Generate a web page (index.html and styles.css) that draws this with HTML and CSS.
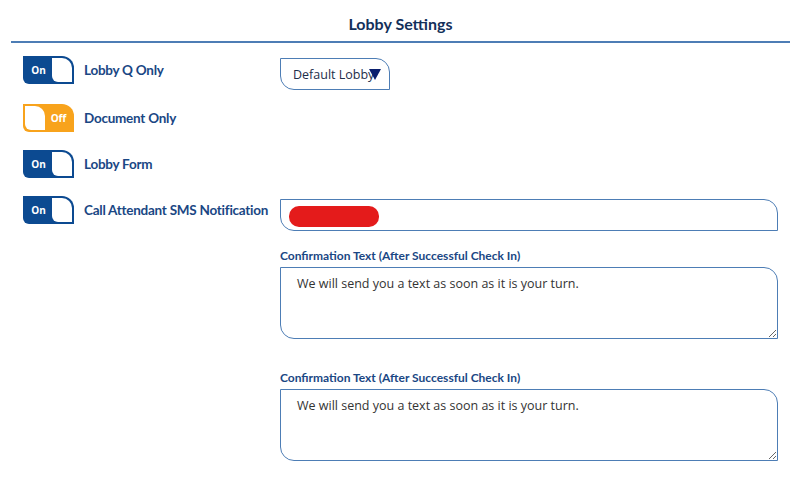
FILE: index.html
```html
<!DOCTYPE html>
<html lang="en">

<head>
    <meta charset="UTF-8">
    <meta name="viewport" content="width=device-width, initial-scale=1.0">
    <title>Lobby Settings</title>
    <link rel="stylesheet" href="styles.css">
</head>

<body>
    <div class="page">
        <h1 class="title">Lobby Settings</h1>

        <div class="settings">
            <div class="setting first">
                <span class="toggle on"><span class="toggle-text">On</span><span class="knob"></span></span>
                <span class="setting-label">Lobby Q Only</span>
            </div>
            <div class="field-col">
                <div class="select">Default Lobby<span class="caret"></span></div>
            </div>

            <div class="setting">
                <span class="toggle off"><span class="knob"></span><span class="toggle-text">Off</span></span>
                <span class="setting-label">Document Only</span>
            </div>
            <div></div>

            <div class="setting">
                <span class="toggle on"><span class="toggle-text">On</span><span class="knob"></span></span>
                <span class="setting-label">Lobby Form</span>
            </div>
            <div></div>

            <div class="setting">
                <span class="toggle on"><span class="toggle-text">On</span><span class="knob"></span></span>
                <span class="setting-label">Call Attendant SMS Notification</span>
            </div>
            <div class="field-col sms">
                <div class="text-input"><span class="redacted"></span></div>

                <label class="field-label">Confirmation Text (After Successful Check In)</label>
                <textarea class="text-area">We will send you a text as soon as it is your turn.</textarea>

                <label class="field-label second">Confirmation Text (After Successful Check In)</label>
                <textarea class="text-area">We will send you a text as soon as it is your turn.</textarea>
            </div>
        </div>
    </div>
</body>

</html>
```

FILE: styles.css
```css
:root {
    --navy: #0c4a91;
    --label: #1a4784;
    --line: #4d7db5;
    --orange: #f8a31c;
}

body {
    margin: 0;
    background: #ffffff;
    font-family: "Open Sans", "Noto Sans", sans-serif;
}

.page {
    padding: 0 11px;
}

.title {
    margin: 0;
    height: 41px;
    line-height: 47px;
    text-align: center;
    font-family: "Lato", sans-serif;
    font-size: 16px;
    font-weight: 700;
    color: #13305a;
    border-bottom: 2px solid var(--line);
}

.settings {
    display: grid;
    grid-template-columns: 269px 498px;
    align-items: start;
    padding-top: 13px;
}

.setting {
    display: flex;
    align-items: flex-start;
    gap: 10px;
    padding-left: 12px;
    height: 46px;
}

.setting.first {
    height: 48px;
}

.toggle {
    display: flex;
    align-items: stretch;
    width: 51px;
    height: 28px;
    box-sizing: border-box;
    padding: 2px;
    border-radius: 0 12px 0 6px;
    flex-shrink: 0;
}

.toggle.on {
    background: var(--navy);
}

.toggle.off {
    background: var(--orange);
}

.toggle-text {
    flex: 1;
    display: flex;
    align-items: center;
    justify-content: center;
    color: #ffffff;
    font-size: 10px;
    font-weight: 700;
}

.knob {
    width: 20px;
    background: #ffffff;
    border-radius: 0 10px 0 6px;
}

.setting-label {
    font-family: "Lato", sans-serif;
    font-size: 13.5px;
    letter-spacing: -0.25px;
    font-weight: 700;
    color: var(--label);
    line-height: 28px;
    white-space: nowrap;
}

.field-col {
    display: flex;
    flex-direction: column;
    padding-top: 2px;
}

.field-col.sms {
    padding-top: 3px;
}

.select {
    position: relative;
    width: 110px;
    height: 32px;
    box-sizing: border-box;
    border: 1px solid var(--line);
    border-radius: 0 14px 0 14px;
    padding-left: 12px;
    line-height: 31px;
    font-size: 12.5px;
    color: #1d2e4a;
}

.caret {
    position: absolute;
    left: 88px;
    top: 10px;
    width: 0;
    height: 0;
    border-left: 6px solid transparent;
    border-right: 6px solid transparent;
    border-top: 11px solid #0a1f6e;
}

.text-input {
    height: 32px;
    box-sizing: border-box;
    border: 1px solid var(--line);
    border-radius: 0 14px 0 14px;
    padding: 6px 0 0 8px;
}

.redacted {
    display: block;
    width: 90px;
    height: 21px;
    background: #e41b1b;
    border-radius: 10px;
}

.field-label {
    margin-top: 17px;
    margin-bottom: 4px;
    font-family: "Lato", sans-serif;
    font-size: 12px;
    font-weight: 700;
    color: var(--label);
}

.field-label.second {
    margin-top: 31px;
}

.text-area {
    display: block;
    width: 100%;
    height: 72px;
    box-sizing: border-box;
    margin: 0;
    border: 1px solid var(--line);
    border-radius: 0 14px 0 14px;
    padding: 7px 16px;
    font-family: "Open Sans", "Noto Sans", sans-serif;
    font-size: 12.5px;
    color: #333333;
    outline: none;
}
```
